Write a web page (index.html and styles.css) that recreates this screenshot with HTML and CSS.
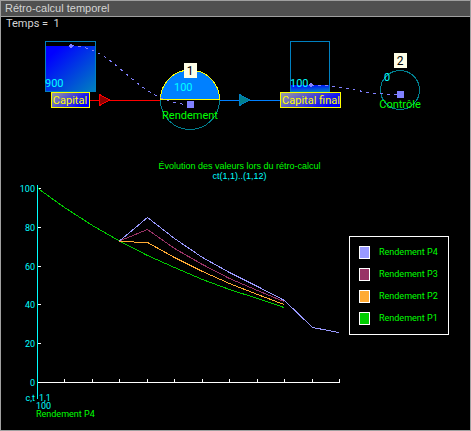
FILE: index.html
```html
<!DOCTYPE html>
<html lang="fr">
<head>
<meta charset="utf-8">
<title>Rétro-calcul temporel</title>
<link rel="stylesheet" href="styles.css">
</head>
<body>
<main class="window">
  <h1 class="titlebar">Rétro-calcul temporel</h1>
  <p class="time">Temps =&nbsp; 1</p>
  <svg class="diagram" viewBox="1 30 469 110" role="img" aria-label="Capital, Rendement, Capital final, Contrôle">
    <defs>
      <linearGradient id="tank" x1="0" y1="0" x2="1" y2="1"><stop offset="0.15" stop-color="#0000ff"/><stop offset="1" stop-color="#0080c0"/></linearGradient>
      <linearGradient id="level" x1="0" y1="0" x2="0.3" y2="1"><stop offset="0" stop-color="#0000ff"/><stop offset="1" stop-color="#0068d0"/></linearGradient>
      <linearGradient id="label" x1="0" y1="0" x2="1" y2="0.4"><stop offset="0" stop-color="#a0a0a0"/><stop offset="1" stop-color="#0000ff"/></linearGradient>
    </defs>
    <g class="crisp">
      <rect x="46" y="46" width="49" height="45" fill="url(#tank)"/>
      <rect class="tank" x="45.5" y="41.5" width="50" height="50"/>
      <rect x="291" y="85" width="39" height="6" fill="url(#level)"/>
      <rect class="tank" x="290.5" y="41.5" width="39" height="50"/>
      <path class="flow-in" d="M90 100.5H161"/>
      <path class="arrow-in" d="M99.500 94.500L109.500 100L99.500 105.500Z"/>
      <path class="flow-out" d="M219 100.500H281"/>
      <path class="arrow-out" d="M239.500 94.500L249.500 100L239.500 105.500Z"/>
      <circle class="ring" cx="190" cy="100" r="29.500"/>
      <path class="dome" d="M160.500 99.500A29.500 29.500 0 0 1 219.500 99.500Z"/>
      <circle class="ring" cx="400" cy="90" r="19.500"/>
      <path class="link" d="M71 46C116 45 136 104 190 104.500"/>
      <path class="link" d="M311 85C350 85 357 94.500 400 94.500"/>
      <path class="node" d="M69 45h1v-1h2v1h1v2h-1v1h-2v-1h-1z"/>
      <path class="node" d="M309 84h1v-1h2v1h1v2h-1v1h-2v-1h-1z"/>
      <rect class="node" x="187" y="101" width="7" height="7"/>
      <rect class="node" x="397" y="91" width="7" height="7"/>
      <rect class="label" x="51.5" y="92.5" width="38" height="15"/>
      <rect class="label" x="280.5" y="92.5" width="60" height="15"/>
      <rect class="badge" x="184" y="63" width="13" height="15"/>
      <rect class="badge" x="394" y="53" width="13" height="15"/>
    </g>
    <g class="value">
      <text x="45" y="87">900</text>
      <text x="174" y="91">100</text>
      <text x="290" y="87">100</text>
      <text x="384" y="81">0</text>
    </g>
    <g class="name" text-anchor="middle">
      <text class="on-label" x="70" y="104">Capital</text>
      <text class="on-label" x="311" y="104">Capital final</text>
      <text x="190" y="119">Rendement</text>
      <text x="400" y="108">Contrôle</text>
      <text class="on-badge" x="190" y="75">1</text>
      <text class="on-badge" x="400" y="65">2</text>
    </g>
  </svg>
  <section class="chart">
    <h2 class="chart-title">Évolution des valeurs lors du rétro-calcul</h2>
    <p class="chart-range">ct(1,1)..(1,12)</p>
    <div class="chart-body">
      <svg class="plot" viewBox="1 182 348 240" role="img" aria-label="Évolution des valeurs">
        <g class="crisp">
          <path class="axis-x" d="M37 382.500H339.500V379M64.500 382V379M92.500 382V379M119.500 382V379M147.500 382V379M174.500 382V379M202.500 382V379M229.500 382V379M257.500 382V379M284.500 382V379M312.500 382V379"/>
          <path class="axis-x" d="M38 188.500H41M38 227.500H41M38 266.500H41M38 304.500H41M38 343.500H41"/>
          <path class="axis-y" d="M37.500 185V399"/>
          <path class="line p1" d="M38 188.500L64.500 207.500L92.500 225.500L119.500 241L147.500 255.500L174.500 267.500L202.500 279.500L229.500 289.500L257.500 298.500L284 307.500"/>
          <path class="line p2" d="M119.500 241.500L147.500 242.500L174.500 257.500L202.500 271.500L229.500 283.500L257.500 294.500L284 304.500"/>
          <path class="line p3" d="M119.500 241L147.500 229.500L174.500 248.500L202.500 264.500L229.500 278.500L257.500 290.500L284 301.500"/>
          <path class="line p4" d="M119.500 241L147.500 217.500L174.500 238.500L202.500 257.500L229.500 272.500L257.500 286.500L284.500 300.500L312.500 327.500L339 332.500"/>
        </g>
        <g class="tick" text-anchor="end">
          <text x="35" y="192">100</text>
          <text x="35" y="231">80</text>
          <text x="35" y="270">60</text>
          <text x="35" y="308">40</text>
          <text x="35" y="347">20</text>
          <text x="35" y="386">0</text>
          <text x="35" y="401">c,t</text>
        </g>
        <g class="tick">
          <text x="39" y="401">1,1</text>
          <text x="36" y="409">100</text>
          <text class="series" x="36" y="417">Rendement P4</text>
        </g>
      </svg>
      <ul class="legend">
        <li><span class="swatch s4"></span>Rendement P4</li>
        <li><span class="swatch s3"></span>Rendement P3</li>
        <li><span class="swatch s2"></span>Rendement P2</li>
        <li><span class="swatch s1"></span>Rendement P1</li>
      </ul>
    </div>
  </section>
</main>
</body>
</html>
```
FILE: styles.css
```css
* { box-sizing: border-box; margin: 0; padding: 0; }

body {
  background: #000;
  color: #d4d4d4;
  font-family: Roboto, "Liberation Sans", sans-serif;
  font-size: 11px;
}

.window {
  min-height: 100vh;
  border: 1px solid #a0a0a0;
  background: #000;
}

.titlebar {
  padding-left: 4px;
  border-bottom: 1px solid #a0a0a0;
  background: #505050;
  font-family: "Liberation Sans", sans-serif;
  font-size: 11px;
  font-weight: 400;
  line-height: 15px;
}

.time { padding-left: 5px; line-height: 13px; }

.diagram, .plot { display: block; width: 100%; }
.crisp { shape-rendering: crispEdges; }

.tank { fill: none; stroke: #0080c0; }
.flow-in { stroke: #f00; }
.arrow-in { fill: #900000; stroke: #f00; }
.flow-out { stroke: #0080ff; }
.arrow-out { fill: #008090; stroke: #0080c0; }
.ring { fill: none; stroke: #008090; }
.dome { fill: #0080ff; stroke: #ff0; }
.link { fill: none; stroke: #8080ff; stroke-dasharray: 3 4; }
.node { fill: #8080ff; }
.label { fill: url(#label); stroke: #ff0; }
.badge { fill: #ffffe8; }

.value { fill: #0ff; font-size: 11px; }
.name { fill: #0f0; font-size: 11px; }
.name .on-label { fill: #ff0; }
.name .on-badge { fill: #000; font-size: 12px; }

.chart { padding-top: 21px; }
.chart-title, .chart-range {
  padding-left: 8px;
  font-family: "Liberation Sans", sans-serif;
  font-size: 9px;
  font-weight: 400;
  line-height: 10px;
  text-align: center;
}
.chart-title { color: #0f0; }
.chart-range { color: #0ff; }

.chart-body {
  display: flex;
  align-items: flex-start;
  padding-top: 1px;
  padding-right: 21px;
}
.plot { flex: 1; min-width: 0; }

.axis-x { fill: none; stroke: #fff; }
.axis-y { stroke: #0ff; }
.line { fill: none; }
.p4 { stroke: #9999ff; }
.p3 { stroke: #993366; }
.p2 { stroke: #ffaa33; }
.p1 { stroke: #00cc00; }
.tick { fill: #0ff; font-size: 9px; }
.series { fill: #0f0; }

.legend {
  display: grid;
  gap: 9px;
  flex: 0 0 100px;
  margin-top: 54px;
  padding: 9px;
  border: 1px solid #fff;
  color: #0f0;
  font-size: 9px;
  line-height: 13px;
  list-style: none;
  white-space: nowrap;
}
.legend li { display: flex; align-items: center; gap: 9px; }
.swatch { width: 11px; height: 13px; border: 1px solid #fff; }
.s4 { background: #9999ff; }
.s3 { background: #993366; }
.s2 { background: #ffaa33; }
.s1 { background: #00cc00; }
```
